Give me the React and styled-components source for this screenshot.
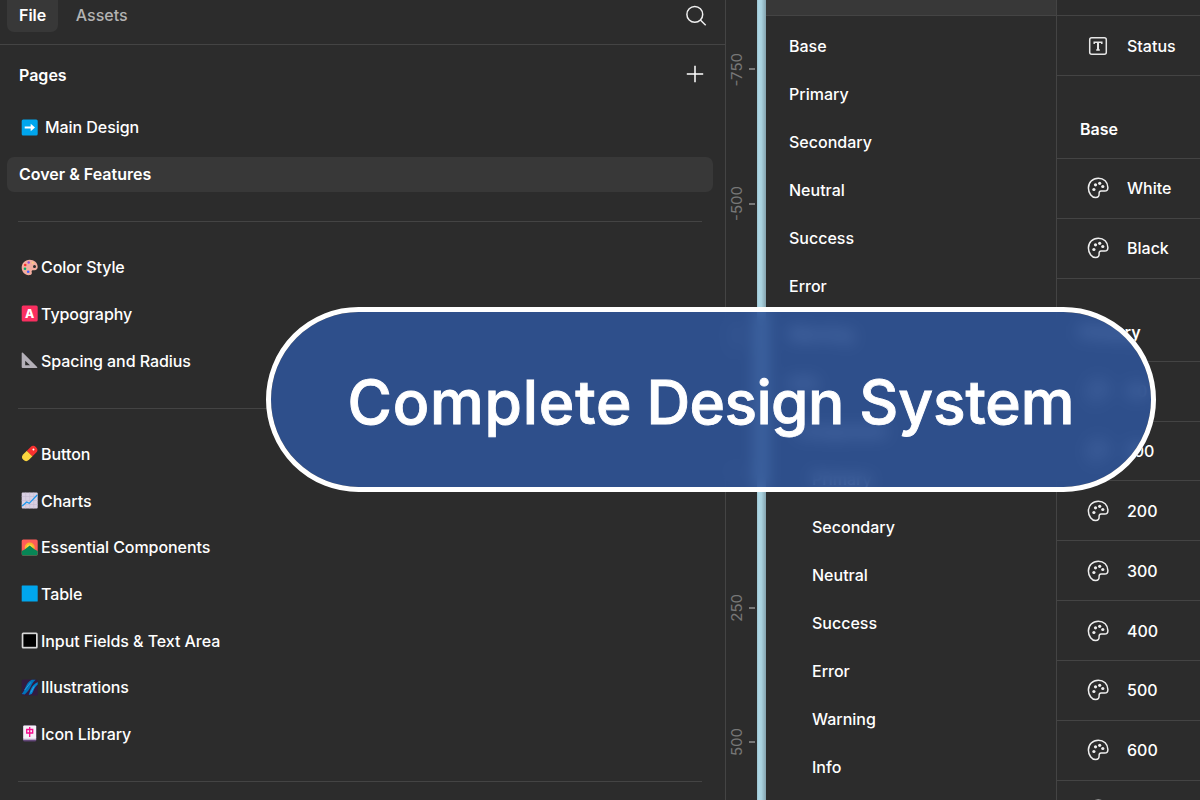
import React from 'react'
import styled, { createGlobalStyle } from 'styled-components';

const GlobalStyle = createGlobalStyle`
  * {
    box-sizing: border-box;
  }
  body {
    margin: 0;
    background: #2c2c2c;
    overflow: hidden;
    font-family: Inter, "Liberation Sans", sans-serif;
    color: #fff;
  }
  svg {
    display: block;
    flex: none;
  }
`;

const Screen = styled.div`
  position: relative;
  display: flex;
  width: 1200px;
  height: 800px;
  overflow: hidden;
  background: #2c2c2c;
`;

/* left sidebar */

const Sidebar = styled.div`
  width: 726px;
  flex: none;
  border-right: 1px solid #444;
`;

const Tabs = styled.div`
  display: flex;
  align-items: flex-start;
  height: 45px;
  padding-left: 7px;
  border-bottom: 1px solid #444;
`;

const Tab = styled.div`
  height: 32px;
  padding: 0 ${props => (props.$active ? '11.5px 0 12px' : '18px')};
  border-radius: 0 0 7px 7px;
  background: ${props => (props.$active ? '#383838' : 'transparent')};
  color: ${props => (props.$active ? '#fff' : '#b3b3b3')};
  font-size: 16px;
  font-weight: ${props => (props.$active ? 600 : 500)};
  line-height: 31px;
`;

const SearchIcon = styled.svg`
  margin: 5px 18px 0 auto;
`;

const PagesHeader = styled.div`
  display: flex;
  align-items: center;
  justify-content: space-between;
  height: 59px;
  padding: 0 21.5px 0 19px;
  font-size: 16px;
  font-weight: 600;
  svg {
    margin-bottom: 2px;
  }
`;

const PageRow = styled.div`
  display: flex;
  align-items: center;
  height: 46.67px;
  padding-left: 21px;
  gap: ${props => (props.$wide ? '7px' : '3px')};
  font-size: 16px;
  font-weight: 450;
  letter-spacing: -0.06px;
  white-space: nowrap;
`;

const SelectedRow = styled.div`
  height: 35px;
  margin: 6px 12px 5.67px 7px;
  padding-left: 12px;
  border-radius: 7px;
  background: #383838;
  font-size: 16px;
  font-weight: 600;
  line-height: 35px;
`;

const Divider = styled.div`
  height: 46.67px;
  padding: 23.7px 23px 0 18px;
  &::before {
    content: '';
    display: block;
    height: 1px;
    background: #444;
  }
`;

/* ruler and canvas edge */

const Ruler = styled.div`
  width: 31px;
  flex: none;
  padding-top: 2px;
`;

const RulerStep = styled.div`
  display: flex;
  align-items: center;
  justify-content: space-between;
  height: 134.6px;
  padding-left: 1px;
  color: #777;
  font-size: 15px;
  span {
    writing-mode: vertical-rl;
    transform: rotate(180deg);
  }
  &::after {
    content: '';
    width: 6px;
    height: 2px;
    margin-right: 2px;
    background: #777;
  }
`;

const CanvasEdge = styled.div`
  width: 9px;
  flex: none;
  background: linear-gradient(90deg, #9cc2ce, #add8e6 20%, #a8d0dd 50%, #84a3ae);
`;

/* variable groups */

const Groups = styled.div`
  width: 290px;
  flex: none;
  height: 800px;
  overflow: hidden;
`;

const GroupsTop = styled.div`
  height: 16px;
  margin-bottom: 5.8px;
  border-bottom: 1px solid #444;
  background: #383838;
`;

const Group = styled.div`
  height: 48.12px;
  padding-left: ${props => 23 + (props.$indent || 0)}px;
  font-size: 16px;
  font-weight: 500;
  line-height: 48px;
`;

/* variables table */

const Variables = styled.div`
  flex: 1;
  height: 800px;
  overflow: hidden;
  border-left: 1px solid #444;
  padding-top: 15.1px;
`;

const Variable = styled.div`
  display: flex;
  align-items: center;
  height: 59.87px;
  padding-left: 30px;
  gap: 18px;
  border-top: 1px solid #444;
  font-size: 16px;
  font-weight: 500;
`;

const VariableHeading = styled.div`
  height: 83px;
  padding: 43px 0 0 23px;
  border-top: 1px solid #444;
  font-size: 16px;
  font-weight: 600;
  line-height: 20px;
`;

/* banner lies over the panels */

const Banner = styled.div`
  position: absolute;
  left: 266px;
  top: 307px;
  width: 890px;
  height: 185px;
  display: flex;
  align-items: center;
  justify-content: center;
  padding-top: 4px;
  border: 5px solid #fff;
  border-radius: 93px;
  background: rgba(47, 89, 165, 0.79);
  background-clip: padding-box;
  backdrop-filter: blur(8px);
  font-size: 60.5px;
  font-weight: 500;
  -webkit-text-stroke: 0.9px #fff;
  white-space: pre;
`;

const Word = styled.span`
  letter-spacing: ${props => props.$tracking}px;
`;

const emojis = {
  arrow: (
    <>
      <rect width="16" height="16" rx="1.5" fill="#00a6ed" />
      <path d="M3 7h6V4.2L13.3 8 9 11.800V9H3z" fill="#fff" />
    </>
  ),
  palette: (
    <>
      <path d="M8 .3C3 .3 0 4 0 8.300c0 4 3 7.400 7 7.400 3 0 3.500-1.700 3-3.200-.4-1.500.5-2 2-1.800 2.500.3 4-1 4-3.200C16 3.300 12.500.3 8 .3z" fill="#f3ad9f" />
      <circle cx="12.800" cy="7" r="1.500" fill="#2c2c2c" />
      <circle cx="7" cy="3" r="1.200" fill="#8f4fd8" />
      <circle cx="3.500" cy="5.500" r="1.300" fill="#f8312f" />
      <circle cx="3.300" cy="9.300" r="1.300" fill="#00b26b" />
      <circle cx="6.500" cy="12.300" r="1.300" fill="#3f5fff" />
      <circle cx="11" cy="3.300" r="1" fill="#ffce7c" />
    </>
  ),
  letter: (
    <>
      <rect width="16" height="16" rx="1.5" fill="#f92f60" />
      <text x="8" y="12.300" fill="#fff" fontSize="12" fontWeight="800" textAnchor="middle">A</text>
    </>
  ),
  ruler: <path d="M0 .8v13.700q0 1 1 1h14q1.200 0 .4-.9L1.200.3Q0-.4 0 .8zM3.500 8.200l4.800 4.500H3.500z" fill="#b4b0b8" fillRule="evenodd" />,
  pill: (
    <g transform="rotate(-45 8 8)">
      <path d="M8 4H3a4 4 0 0 0 0 8h5z" fill="#fcd53f" />
      <path d="M8 4h5a4 4 0 0 1 0 8H8z" fill="#f8312f" />
      <circle cx="13.500" cy="7.800" r="1" fill="#fff" />
    </g>
  ),
  chart: (
    <>
      <rect width="16" height="16" rx="1" fill="#d9d0e3" />
      <path d="M0 4h16M0 8h16M0 12h16M4 0v16M8 0v16M12 0v16" stroke="#c5bbd2" strokeWidth=".6" />
      <path d="M.5 13.500 5 9.500l2.500 1.300L15.500 2.500" fill="none" stroke="#1697ee" strokeWidth="1.200" />
    </>
  ),
  sunrise: (
    <>
      <rect width="16" height="16" rx="1.5" fill="#ff5c58" />
      <circle cx="8" cy="8" r="5" fill="#f9b52e" />
      <circle cx="8" cy="8" r="3" fill="#fcd53f" />
      <path d="M0 11.500 3 10l5-4 5 4 3 1.500v3q0 1.500-1.500 1.500h-13Q0 16 0 14.500z" fill="#078656" />
    </>
  ),
  square: <rect width="16" height="16" rx=".6" fill="#00a6ed" />,
  button: (
    <>
      <rect width="16" height="16" rx="1.500" fill="#d8d8d8" />
      <rect x="1.700" y="1.700" width="12.600" height="12.600" fill="#000" />
    </>
  ),
  galaxy: (
    <>
      <rect width="16" height="16" rx="1.5" fill="#321b41" />
      <path d="M0 14.500C4 11 3 4 10 .2h4C9 4 10 9 3 15z" fill="#0074ba" />
      <path d="M7 15.500C9 11 9 6 16 2.500V5c-4 3-4 7-6 9.500z" fill="#0084ce" />
      <path d="M3 10.500 9 3M9 13l3.500-6" stroke="#4aa9e8" strokeWidth=".7" />
    </>
  ),
  mahjong: (
    <>
      <rect x="1.500" width="13" height="16" rx="1.300" fill="#5c3f73" />
      <path d="M1.500 12h13v2.600h-13z" fill="#b9a9c6" />
      <rect x="1.500" width="13" height="13.300" rx="1" fill="#f4f0f7" />
      <path d="M8 1.500V11.500M5 4h6v3.500H5z" fill="none" stroke="#f70a8d" strokeWidth="1.300" />
    </>
  ),
};

const pages = [
  { icon: 'palette', name: 'Color Style' },
  { icon: 'letter', name: 'Typography' },
  { icon: 'ruler', name: 'Spacing and Radius' },
  null,
  { icon: 'pill', name: 'Button' },
  { icon: 'chart', name: 'Charts' },
  { icon: 'sunrise', name: 'Essential Components' },
  { icon: 'square', name: 'Table' },
  { icon: 'button', name: 'Input Fields & Text Area' },
  { icon: 'galaxy', name: 'Illustrations' },
  { icon: 'mahjong', name: 'Icon Library' },
  null,
];

const groups = ['Base', 'Primary', 'Secondary', 'Neutral', 'Success', 'Error', 'Warning', 'Info'];
const subGroups = ['Primary', 'Secondary', 'Neutral', 'Success', 'Error', 'Warning', 'Info'];
const shades = ['50', '100', '200', '300', '400', '500', '600', '700'];

function Emoji({ name }) {
  return <svg width="17" height="17" viewBox="-0.7 -0.5 17 17">{emojis[name]}</svg>
}

function PaletteIcon() {
  return (
    <svg width="22" height="22" viewBox="0 0 22 22" fill="none" stroke="#eee" strokeWidth="1.5">
      <path d="M11.300 1.200C5.600 1.200 1.400 5.400 1.400 11c0 5 3.400 9.600 7.300 9.600 2.500 0 3.500-1.700 3.400-3.700-.1-2.100.5-2.800 2-2.800h3.600c2 0 3.200-1.300 3.200-3.600 0-5.400-4.100-9.300-9.600-9.300z" />
      <g fill="#eee" stroke="none">
        <circle cx="8.5" cy="7.8" r="1.6" />
        <circle cx="12.7" cy="6.3" r="1.6" />
        <circle cx="15.8" cy="9.5" r="1.6" />
        <circle cx="6.9" cy="12.5" r="1.6" />
      </g>
    </svg>
  )
}

function TextIcon() {
  return (
    <svg width="22" height="22" viewBox="0 0 22 22" fill="none" stroke="#e6e6e6">
      <rect x="2.7" y="2.7" width="16.6" height="16.6" rx="2" strokeWidth="1.5" />
      <path d="M7.200 9V7.200h7.600V9M9.200 15h3.600" strokeWidth="1.5" />
      <path d="M11 7.200V15" strokeWidth="2" />
    </svg>
  )
}

export default function App() {
  return (
    <>
      <GlobalStyle />
      <Screen>
        <Sidebar>
          <Tabs>
            <Tab $active>File</Tab>
            <Tab>Assets</Tab>
            <SearchIcon width="22" height="22" viewBox="0 0 22 22" fill="none" stroke="#f0f0f0" strokeWidth="1.5">
              <circle cx="9.800" cy="9.400" r="7.900" />
              <path d="m15.400 15 5.300 5.200" />
            </SearchIcon>
          </Tabs>
          <PagesHeader>
            Pages
            <svg width="18" height="18" viewBox="0 0 18 18" stroke="#fff" strokeWidth="1.5">
              <path d="M9 .8v16.400M.8 9h16.400" />
            </svg>
          </PagesHeader>
          <PageRow $wide><Emoji name="arrow" />Main Design</PageRow>
          <SelectedRow>Cover &amp; Features</SelectedRow>
          <Divider />
          {pages.map((page, i) => page
            ? <PageRow key={i}><Emoji name={page.icon} />{page.name}</PageRow>
            : <Divider key={i} />
          )}
        </Sidebar>

        <Ruler>
          {['-750', '-500', '-250', '0', '250', '500'].map(step => (
            <RulerStep key={step}><span>{step}</span></RulerStep>
          ))}
        </Ruler>
        <CanvasEdge />

        <Groups>
          <GroupsTop />
          {groups.map(name => <Group key={name}>{name}</Group>)}
          <Group $indent={8}>Component</Group>
          {subGroups.map(name => <Group key={name} $indent={23}>{name}</Group>)}
        </Groups>

        <Variables>
          <Variable><TextIcon />Status</Variable>
          <VariableHeading>Base</VariableHeading>
          <Variable><PaletteIcon />White</Variable>
          <Variable><PaletteIcon />Black</Variable>
          <VariableHeading>Primary</VariableHeading>
          {shades.map(shade => <Variable key={shade}><PaletteIcon />{shade}</Variable>)}
        </Variables>

        <Banner>
          <Word $tracking={0.8}>Complete</Word>
          <Word $tracking={-2}> </Word>
          <Word $tracking={-0.6}>Design </Word>
          <Word $tracking={-0.1}>System</Word>
        </Banner>
      </Screen>
    </>
  )
}
